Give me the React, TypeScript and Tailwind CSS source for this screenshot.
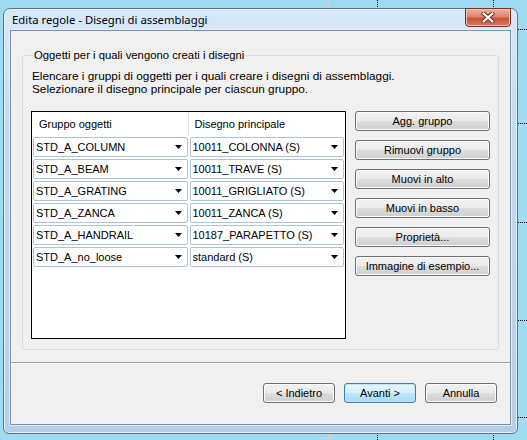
import React from 'react';

const rows = [
  ['STD_A_COLUMN', '10011_COLONNA (S)'],
  ['STD_A_BEAM', '10011_TRAVE (S)'],
  ['STD_A_GRATING', '10011_GRIGLIATO (S)'],
  ['STD_A_ZANCA', '10011_ZANCA (S)'],
  ['STD_A_HANDRAIL', '10187_PARAPETTO (S)'],
  ['STD_A_no_loose', 'standard (S)'],
];

const sideButtons = ['Agg. gruppo', 'Rimuovi gruppo', 'Muovi in alto', 'Muovi in basso', 'Proprietà...', 'Immagine di esempio...'];

const btn =
  'h-[20px] rounded-[3px] border border-[#707070] bg-[linear-gradient(#f2f2f2_0%,#ebebeb_48%,#dddddd_52%,#cfcfcf_100%)] shadow-[inset_0_0_0_1px_#fbfbfb] text-[11px] text-black leading-none flex items-center justify-center';

function Arrow() {
  return (
    <svg width="7" height="4" viewBox="0 0 7 4" className="shrink-0">
      <path d="M0 0 H7 L3.5 4 Z" fill="#000" />
    </svg>
  );
}

function Combo({ text }: { text: string }) {
  return (
    <div className="h-[20px] flex items-center justify-between bg-white border border-[#abc4dc] rounded-[2px] pl-[2px] pr-[5px]">
      <span className="text-[11px] text-black leading-none truncate">{text}</span>
      <Arrow />
    </div>
  );
}

export default function App() {
  return (
    <div className="relative w-[527px] h-[440px] overflow-hidden bg-[#9edbf0] font-['Liberation_Sans',Arial,sans-serif]">
      {/* bits of the drawing behind the dialog */}
      <div className="absolute left-[327px] top-0 w-[3px] h-[9px] bg-[#c8d0d4]" />
      <div className="absolute left-[377px] top-0 w-0 h-[9px] border-l border-dotted border-black" />
      <div className="absolute left-[493px] top-0 w-0 h-[9px] border-l border-dotted border-black" />
      <div className="absolute left-[328px] top-[433px] w-[3px] h-[7px] bg-[#c8d0d4]" />
      <div className="absolute left-[377px] top-[433px] w-0 h-[7px] border-l border-dotted border-black" />
      <div className="absolute left-[493px] top-[433px] w-0 h-[7px] border-l border-dotted border-black" />
      <div className="absolute left-[518px] top-[29px] w-[9px] h-0 border-t border-dotted border-black" />
      <div className="absolute left-[518px] top-[123px] w-[9px] h-0 border-t border-dotted border-black" />
      <div className="absolute left-[518px] top-[222px] w-[9px] h-0 border-t border-dotted border-black" />
      <div className="absolute left-[518px] top-[320px] w-[9px] h-0 border-t border-dotted border-black" />
      <div className="absolute left-[518px] top-[417px] w-[9px] h-0 border-t border-dotted border-black" />

      {/* dialog window */}
      <div className="absolute left-[3px] top-[8px] w-[515px] h-[426px] flex flex-col rounded-t-[7px] rounded-b-[6px] border border-[#5a7390] bg-[linear-gradient(#d8e9f9,#c2d9f0_30%,#b5cee8)] shadow-[inset_0_0_0_1px_#e4eff9]">
        <div className="h-[21px] flex items-start justify-between pl-[8px] pr-[6px]">
          <span className="mt-[4px] text-[11.3px] leading-[14px] text-black font-['Noto_Sans',sans-serif]">
            Edita regole - Disegni di assemblaggi
          </span>
          <div className="w-[46px] h-[19px] -mt-[1px] rounded-b-[4px] border border-[#7a3326] bg-[linear-gradient(#eeb3a4_0%,#de826b_45%,#cc5238_55%,#d57a60_100%)] shadow-[inset_0_0_0_1px_#f3bfb1] flex items-center justify-center">
            <svg width="14" height="11" viewBox="0 0 14 11">
              <path d="M2.5 1.5 L11.5 9.5 M11.5 1.5 L2.5 9.5" stroke="#6a2a1c" strokeWidth="4" strokeLinecap="round" />
              <path d="M2.5 1.5 L11.5 9.5 M11.5 1.5 L2.5 9.5" stroke="#fff" strokeWidth="2.2" strokeLinecap="round" />
            </svg>
          </div>
        </div>

        {/* client area */}
        <div className="mx-[6px] h-[395px] flex flex-col bg-[#f0f0f0] border border-[#7d91aa] shadow-[0_0_0_1px_#e2edf8]">
          <fieldset className="mt-[17px] mx-[11px] h-[302px] border border-[#d5dfe5] rounded-[3px] pl-[8px] pr-[8px]">
            <legend className="ml-[2px] px-[1px] text-[11.3px] leading-[14px] text-black">
              Oggetti per i quali vengono creati i disegni
            </legend>
            <div className="pt-[8px] pl-[1px] text-[11.8px] leading-[13px] text-black">
              <p>Elencare i gruppi di oggetti per i quali creare i disegni di assemblaggi.</p>
              <p>Selezionare il disegno principale per ciascun gruppo.</p>
            </div>

            <div className="mt-[15px] flex gap-[9px]">
              <div className="w-[315px] h-[228px] bg-white border border-black px-[1px]">
                <div className="h-[24px] grid grid-cols-2 text-[11px] text-black">
                  <div className="flex items-center pl-[6px] border-r border-[#e3e8ee]">Gruppo oggetti</div>
                  <div className="flex items-center pl-[6px]">Disegno principale</div>
                </div>
                <div className="mt-[1px] flex flex-col gap-[2px]">
                  {rows.map(([a, b]) => (
                    <div key={a} className="grid grid-cols-2 gap-[2px]">
                      <Combo text={a} />
                      <Combo text={b} />
                    </div>
                  ))}
                </div>
              </div>

              <div className="w-[135px] flex flex-col gap-[9px]">
                {sideButtons.map(label => (
                  <div key={label} className={btn}>{label}</div>
                ))}
              </div>
            </div>
          </fieldset>

          <div className="mt-[12px] border-t border-[#a0a0a0] shadow-[0_1px_0_#fcfcfc]" />

          <div className="mt-[20px] flex justify-end gap-[9px] pr-[13px]">
            <div className={btn + ' w-[72px]'}>&lt; Indietro</div>
            <div className="w-[72px] h-[20px] rounded-[3px] border border-[#3c7fb1] bg-[linear-gradient(#eaf6fd_0%,#d9f0fc_48%,#bee6fd_52%,#a7d9f5_100%)] shadow-[inset_0_0_0_1px_#c4e5f6] text-[11px] text-black leading-none flex items-center justify-center">
              Avanti &gt;
            </div>
            <div className={btn + ' w-[72px]'}>Annulla</div>
          </div>
        </div>
      </div>
    </div>
  );
}
